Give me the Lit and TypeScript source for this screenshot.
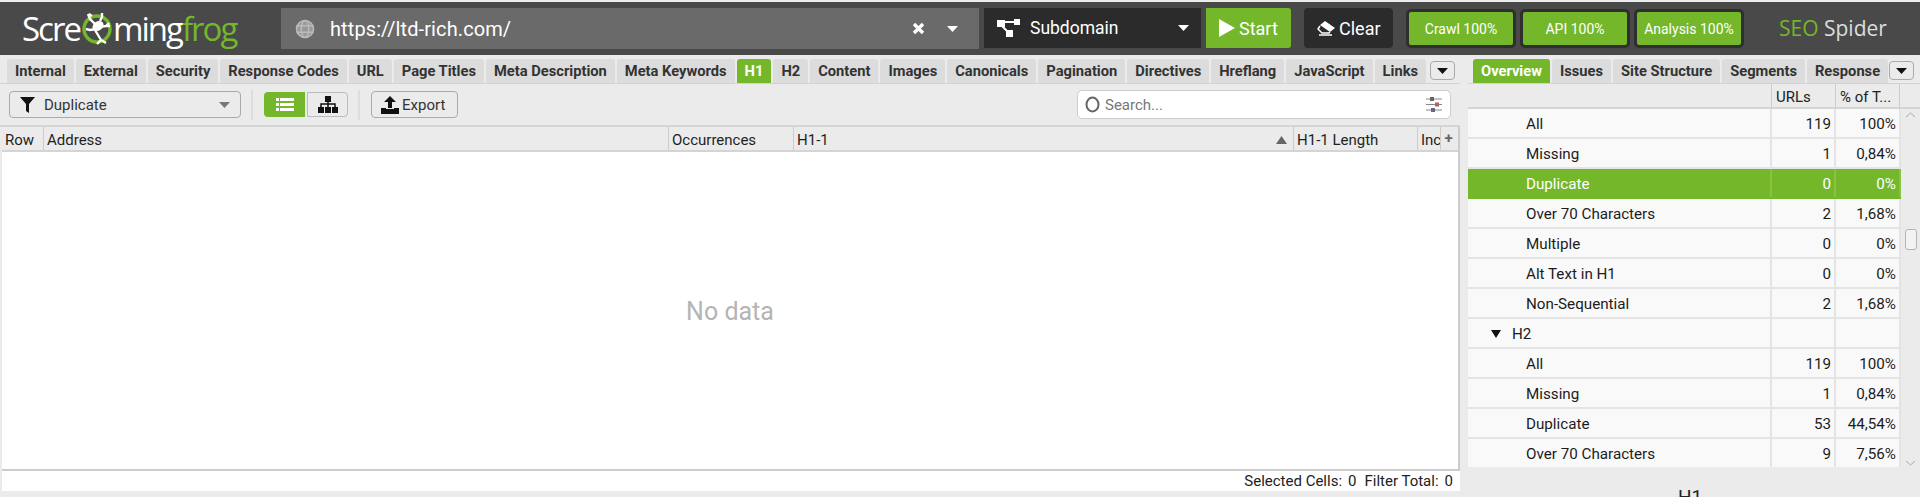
import { LitElement, css, html, svg } from "lit";
import { customElement } from "lit/decorators.js";

const leftTabs = [
  "Internal", "External", "Security", "Response Codes", "URL", "Page Titles",
  "Meta Description", "Meta Keywords", "H1", "H2", "Content", "Images",
  "Canonicals", "Pagination", "Directives", "Hreflang", "JavaScript", "Links",
];
const rightTabs = ["Overview", "Issues", "Site Structure", "Segments", "Response"];

type Row = { label: string; urls?: string; pct?: string; group?: boolean; active?: boolean };
const rows: Row[] = [
  { label: "All", urls: "119", pct: "100%" },
  { label: "Missing", urls: "1", pct: "0,84%" },
  { label: "Duplicate", urls: "0", pct: "0%", active: true },
  { label: "Over 70 Characters", urls: "2", pct: "1,68%" },
  { label: "Multiple", urls: "0", pct: "0%" },
  { label: "Alt Text in H1", urls: "0", pct: "0%" },
  { label: "Non-Sequential", urls: "2", pct: "1,68%" },
  { label: "H2", group: true },
  { label: "All", urls: "119", pct: "100%" },
  { label: "Missing", urls: "1", pct: "0,84%" },
  { label: "Duplicate", urls: "53", pct: "44,54%" },
  { label: "Over 70 Characters", urls: "9", pct: "7,56%" },
];

const caret = (color: string, w = 11, h = 6) => html`<svg width=${w} height=${h} viewBox="0 0 11 6" preserveAspectRatio="none"><path d="M0 0h11L5.5 6z" fill=${color}/></svg>`;

const frog = svg`<circle cx="16" cy="18" r="13" fill="none" stroke="#74b72b" stroke-width="3.4"/>
  <ellipse cx="17" cy="15" rx="6" ry="4.5" transform="rotate(-35 17 15)" fill="#fff"/>
  <path d="M14 13L9 8 7 3M11 5l-3-2M19 10l2-4 0-4M18 16l7-1 4 0M25 15l3-3M15 18l-6 1-4-1M14 19l3 5 3 5 5 3M20 29l-4 4" fill="none" stroke="#fff" stroke-width="2.4"/>`;

@customElement("app-root")
export class AppRoot extends LitElement {
  static styles = css`
    :host {
      --green: #74b72b;
      display: block;
      width: 1920px;
      height: 497px;
      overflow: hidden;
      background: #ebebeb;
      font-family: Roboto, "Liberation Sans", sans-serif;
      color: #222;
    }

    .top-strip {
      height: 2px;
      background: #ececec;
    }

    .header {
      display: flex;
      align-items: flex-start;
      height: 53px;
      background: #494949;
      padding-top: 6px;
      box-sizing: border-box;
    }

    .logo {
      display: flex;
      align-items: center;
      width: 281px;
      flex: none;
      height: 41px;
      padding-left: 22px;
      box-sizing: border-box;
      font-family: "Open Sans", sans-serif;
      font-weight: 400;
      font-size: 33px;
      letter-spacing: -2px;
      color: #fff;
      white-space: nowrap;
    }

    .logo svg {
      margin: 0 0 0 1px;
    }

    .logo .frog-word {
      color: var(--green);
    }

    .url {
      display: flex;
      align-items: center;
      width: 698px;
      height: 41px;
      background: #6a6a6a;
      color: #fff;
      font-size: 20px;
      box-sizing: border-box;
      padding-left: 14px;
    }

    .url .address {
      flex: 1;
      margin-left: 15px;
      letter-spacing: 0.1px;
    }

    .url .clear-x {
      margin-right: 22px;
    }

    .url .more {
      display: flex;
      margin-right: 21px;
    }

    .mode {
      display: flex;
      align-items: center;
      width: 217px;
      height: 40px;
      margin-left: 5px;
      background: #2b2b2b;
      color: #fff;
      font-size: 17.5px;
      box-sizing: border-box;
      padding-left: 13px;
    }

    .mode span {
      flex: 1;
      margin-left: 10px;
    }

    .mode svg:last-child {
      margin-right: 12px;
    }

    .start {
      display: flex;
      align-items: center;
      gap: 4px;
      width: 85px;
      height: 40px;
      margin-left: 5px;
      padding-left: 13px;
      box-sizing: border-box;
      background: var(--green);
      border-radius: 0 3px 3px 0;
      color: #fff;
      font-size: 18px;
    }

    .clear {
      display: flex;
      align-items: center;
      gap: 4px;
      width: 89px;
      height: 40px;
      margin-left: 13px;
      padding-left: 13px;
      box-sizing: border-box;
      background: #2b2b2b;
      border-radius: 4px;
      color: #fff;
      font-size: 18px;
    }

    .progress {
      display: flex;
      gap: 4px;
      margin-left: 13px;
    }

    .progress div {
      display: flex;
      align-items: center;
      justify-content: center;
      width: 110px;
      height: 39px;
      margin-top: 1px;
      box-sizing: border-box;
      border: 3px solid #2f2f2f;
      border-radius: 5px;
      background: var(--green);
      color: #fff;
      font-size: 14px;
    }

    .brand {
      margin-left: 35px;
      height: 41px;
      line-height: 41px;
      font-family: "Open Sans", sans-serif;
      font-size: 21px;
      color: #ddd;
      white-space: nowrap;
    }

    .brand b {
      font-weight: 400;
      color: var(--green);
    }

    .main {
      display: flex;
      height: 442px;
    }

    .left {
      display: flex;
      flex-direction: column;
      width: 1460px;
      flex: none;
    }

    .right {
      display: flex;
      flex-direction: column;
      flex: 1;
      margin-left: 8px;
      min-width: 0;
    }

    .tabs {
      display: flex;
      gap: 2px;
      height: 25px;
      margin-top: 4px;
      padding-left: 7px;
      box-sizing: border-box;
      border-bottom: 1px solid #d2d2d2;
      flex: none;
      position: relative;
    }

    .right .tabs {
      padding-left: 5px;
      overflow: hidden;
    }

    .tab {
      display: flex;
      align-items: center;
      height: 24px;
      padding: 0 8px;
      background: #dcdcdc;
      border-radius: 3px 3px 0 0;
      font-size: 14.7px;
      font-weight: 700;
      color: #333;
      white-space: nowrap;
    }

    .tab.on {
      background: var(--green);
      color: #fff;
    }

    .tab-more {
      position: absolute;
      top: 2px;
      display: flex;
      align-items: center;
      justify-content: center;
      width: 25px;
      height: 19px;
      box-sizing: border-box;
      background: #ebebeb;
      border: 1px solid #aaa;
      border-radius: 4px;
    }

    .left .tab-more {
      left: 1430px;
    }

    .right .tab-more {
      left: 421px;
    }

    .toolbar {
      display: flex;
      align-items: center;
      height: 43px;
      flex: none;
      padding-left: 9px;
      padding-right: 9px;
      box-sizing: border-box;
      border-bottom: 2px solid #d4d4d4;
    }

    .filter {
      display: flex;
      align-items: center;
      width: 232px;
      height: 27px;
      box-sizing: border-box;
      border: 1px solid #aaa;
      border-radius: 4px;
      padding: 0 10px;
      color: #333;
      font-size: 15px;
    }

    .filter span {
      flex: 1;
      margin-left: 9px;
    }

    .sep {
      width: 2px;
      height: 30px;
      background: #ddd;
      margin: 0 11px 0 10px;
    }

    .toggle {
      display: flex;
      align-items: center;
      justify-content: center;
      width: 41px;
      height: 25px;
      box-sizing: border-box;
      border-radius: 4px 0 0 4px;
    }

    .toggle.on {
      background: var(--green);
    }

    .toggle.off {
      margin-left: 2px;
      border: 1px solid #bbb;
      border-radius: 0 4px 4px 0;
    }

    .export {
      display: flex;
      align-items: center;
      gap: 3px;
      width: 87px;
      height: 27px;
      padding-left: 9px;
      box-sizing: border-box;
      border: 1px solid #aaa;
      border-radius: 4px;
      color: #333;
      font-size: 15px;
    }

    .search {
      display: flex;
      align-items: center;
      width: 374px;
      height: 29px;
      margin-left: auto;
      padding: 0 8px 0 7px;
      box-sizing: border-box;
      background: #fff;
      border: 1px solid #ccc;
      border-radius: 5px;
      color: #777;
      font-size: 15px;
    }

    .search span {
      flex: 1;
      margin-left: 5px;
    }

    .table {
      display: flex;
      flex-direction: column;
      flex: none;
      height: 344px;
      margin-left: 2px;
      box-sizing: border-box;
      background: #fff;
      border-right: 2px solid #ccc;
      border-bottom: 2px solid #ccc;
    }

    .thead {
      display: grid;
      grid-template-columns: 42px 625px 125px 500px 124px 23px 17px;
      height: 25px;
      flex: none;
      background: #ebebeb;
      border-bottom: 2px solid #d4d4d4;
      box-sizing: border-box;
    }

    .thead div {
      display: flex;
      align-items: center;
      padding: 2px 0 0 3px;
      border-right: 1px solid #ccc;
      font-size: 15px;
      white-space: nowrap;
      overflow: hidden;
      color: #1f1f1f;
    }

    .thead .sorted {
      justify-content: space-between;
      padding-right: 6px;
    }

    .thead .plus {
      justify-content: center;
      padding: 0 2px 2px 0;
      font-weight: 700;
      color: #666;
      border-right: none;
    }

    .empty {
      flex: 1;
      display: flex;
      align-items: center;
      justify-content: center;
      padding-top: 2px;
      color: #b4b4b4;
      font-size: 25px;
    }

    .status {
      display: flex;
      justify-content: flex-end;
      align-items: center;
      height: 20px;
      flex: none;
      padding-right: 7px;
      margin-left: 2px;
      background: #fff;
      color: #222;
      font-size: 15px;
      box-sizing: border-box;
      white-space: nowrap;
    }

    .status b {
      font-weight: 400;
      margin: 0 8px 0 6px;
    }

    .status b:last-child {
      margin-right: 0;
    }

    .overview {
      display: flex;
      flex: none;
      height: 384px;
    }

    .grid {
      width: 433px;
      flex: none;
    }

    .ghead,
    .grow {
      display: grid;
      grid-template-columns: 304px 64px 65px;
    }

    .ghead {
      width: 452px;
      grid-template-columns: 304px 64px 64px 20px;
      height: 25px;
      background: #ebebeb;
      border-bottom: 2px solid #d4d4d4;
      box-sizing: border-box;
      font-size: 15px;
    }

    .ghead div {
      display: flex;
      align-items: center;
      padding: 2px 0 0 4px;
      border-right: 1px solid #ccc;
    }

    .ghead div:last-child {
      border-right: none;
    }

    .body {
      height: 358px;
      overflow: hidden;
      width: 433px;
    }

    .grow {
      height: 30px;
      background: #f9f9f9;
      border-bottom: 2px solid #e4e4e4;
      box-sizing: border-box;
      font-size: 15.2px;
      color: #1c1c1c;
    }

    .grow div {
      display: flex;
      align-items: center;
      min-width: 0;
      padding-top: 1px;
      border-right: 2px solid #e4e4e4;
      white-space: nowrap;
    }

    .grow .name {
      padding-left: 58px;
    }

    .grow.group .name {
      padding-left: 23px;
      gap: 11px;
    }

    .grow .num {
      justify-content: flex-end;
      padding-right: 3px;
    }

    .grow.on {
      background: var(--green);
      color: #fff;
      border-bottom-color: var(--green);
    }

    .grow.on div {
      border-right-color: #86c244;
    }

    .scroll {
      display: flex;
      flex-direction: column;
      align-items: center;
      width: 19px;
      height: 359px;
      margin-top: 25px;
      position: relative;
    }

    .scroll .thumb {
      position: absolute;
      top: 120px;
      left: 4px;
      width: 12px;
      height: 21px;
      box-sizing: border-box;
      background: #f2f2f2;
      border: 1px solid #b5b5b5;
      border-radius: 3px;
    }

    .scroll .up {
      margin-top: 3px;
    }

    .scroll .down {
      margin-top: auto;
      margin-bottom: 2px;
    }

    .title {
      text-align: center;
      margin-top: 18px;
      padding-right: 8px;
      font-size: 19px;
      line-height: 22px;
      color: #222;
    }
  `;

  render() {
    return html`
      <div class="top-strip"></div>
      <div class="header">
        <div class="logo">
          Scre<svg width="32" height="36" viewBox="0 0 32 36">${frog}</svg>ming<span class="frog-word">frog</span>
        </div>
        <div class="url">
          <svg width="20" height="20" viewBox="0 0 21 21" fill="none" stroke="#bbb" stroke-width="1.5">
            <circle cx="10.5" cy="10.5" r="9" fill="#999"/>
            <ellipse cx="10.5" cy="10.5" rx="4" ry="9"/>
            <path d="M2 7h17M2 14h17"/>
          </svg>
          <span class="address">https://ltd-rich.com/</span>
          <svg class="clear-x" width="13" height="13" viewBox="0 0 13 13"><path d="M2 2l9 9M11 2l-9 9" stroke="#fff" stroke-width="3.4"/></svg>
          <span class="more">${caret("#fff")}</span>
        </div>
        <div class="mode">
          <svg width="23" height="18" viewBox="0 0 23 18" fill="#fff">
            <rect x="0" y="1" width="8" height="7"/><rect x="17" y="0" width="6" height="6"/><rect x="9" y="11" width="7" height="7"/>
            <path d="M6 3h12M4 6l7 7" stroke="#fff" stroke-width="2"/>
          </svg>
          <span>Subdomain</span>
          ${caret("#fff")}
        </div>
        <div class="start">
          <svg width="16" height="18" viewBox="0 0 16 18"><path d="M0 0l16 9L0 18z" fill="#fff"/></svg>Start
        </div>
        <div class="clear">
          <svg width="18" height="15" viewBox="0 0 18 15">
            <path d="M8 0l10 7-5 4L3 4z" fill="#fff"/>
            <path d="M3 5L1 8l4 4h7l1-1M2 14h13" fill="none" stroke="#fff" stroke-width="1.5"/>
          </svg>Clear
        </div>
        <div class="progress">
          <div>Crawl 100%</div><div>API 100%</div><div>Analysis 100%</div>
        </div>
        <div class="brand"><b>SEO</b> Spider</div>
      </div>
      <div class="main">
        <div class="left">
          <div class="tabs">
            ${leftTabs.map((t) => html`<div class="tab ${t === "H1" ? "on" : ""}">${t}</div>`)}
            <div class="tab-more">${caret("#111")}</div>
          </div>
          <div class="toolbar">
            <div class="filter">
              <svg width="15" height="16" viewBox="0 0 15 16"><path d="M0 0h15L9 7v9l-3-2V7z" fill="#111"/></svg>
              <span>Duplicate</span>
              ${caret("#777")}
            </div>
            <div class="sep"></div>
            <div class="toggle on">
              <svg width="18" height="14" viewBox="0 0 18 14" fill="#fff">
                <rect y="0" width="3" height="3"/><rect x="4" y="0" width="14" height="3"/>
                <rect y="5" width="3" height="3"/><rect x="4" y="5" width="14" height="3"/>
                <rect y="10" width="3" height="3"/><rect x="4" y="10" width="14" height="3"/>
              </svg>
            </div>
            <div class="toggle off">
              <svg width="20" height="17" viewBox="0 0 20 17" fill="#111">
                <rect x="7" y="0" width="6" height="6"/><rect x="0" y="11" width="6" height="6"/><rect x="7" y="11" width="6" height="6"/><rect x="14" y="11" width="6" height="6"/>
                <path d="M10 5v6M3 11V8h14v3" fill="none" stroke="#111" stroke-width="1.5"/>
              </svg>
            </div>
            <div class="sep"></div>
            <div class="export">
              <svg width="18" height="18" viewBox="0 0 18 18" fill="#111">
                <path d="M9 0l6 6h-4v6H7V6H3z"/><path d="M0 12h5v1h8v-1h5v6H0z"/>
              </svg>Export
            </div>
            <div class="search">
              <svg width="15" height="17" viewBox="0 0 15 17"><ellipse cx="7.5" cy="8.5" rx="6" ry="7" fill="none" stroke="#666" stroke-width="2"/></svg>
              <span>Search...</span>
              <svg width="16" height="15" viewBox="0 0 16 15">
                <path d="M0 2h16M0 7.5h16M0 13h16" stroke="#888" stroke-width="1"/>
                <rect x="4" y="0" width="4" height="4" fill="#666"/><rect x="9" y="5.5" width="4" height="4" fill="#a66"/><rect x="5" y="11" width="4" height="4" fill="#668"/>
              </svg>
            </div>
          </div>
          <div class="table">
            <div class="thead">
              <div>Row</div>
              <div>Address</div>
              <div>Occurrences</div>
              <div class="sorted">H1-1 <svg width="11" height="8" viewBox="0 0 11 8"><path d="M0 8h11L5.5 0z" fill="#666"/></svg></div>
              <div>H1-1 Length</div>
              <div>Inc</div>
              <div class="plus">+</div>
            </div>
            <div class="empty">No data</div>
          </div>
          <div class="status">Selected Cells:<b>0</b>Filter Total:<b>0</b></div>
        </div>
        <div class="right">
          <div class="tabs">
            ${rightTabs.map((t) => html`<div class="tab ${t === "Overview" ? "on" : ""}">${t}</div>`)}
            <div class="tab-more">${caret("#111")}</div>
          </div>
          <div class="overview">
            <div class="grid">
              <div class="ghead"><div></div><div>URLs</div><div>% of T...</div><div></div></div>
              <div class="body">
                ${rows.map((r) => html`
                  <div class="grow ${r.group ? "group" : ""} ${r.active ? "on" : ""}">
                    <div class="name">${r.group ? caret("#111", 10, 8) : ""}${r.label}</div>
                    <div class="num">${r.urls ?? ""}</div>
                    <div class="num">${r.pct ?? ""}</div>
                  </div>`)}
              </div>
            </div>
            <div class="scroll">
              <svg class="up" width="11" height="6" viewBox="0 0 11 6"><path d="M1 5l4.5-4 4.5 4" fill="none" stroke="#aaa"/></svg>
              <div class="thumb"></div>
              <svg class="down" width="11" height="6" viewBox="0 0 11 6"><path d="M1 1l4.5 4 4.5-4" fill="none" stroke="#aaa"/></svg>
            </div>
          </div>
          <div class="title">H1</div>
        </div>
      </div>
    `;
  }
}
